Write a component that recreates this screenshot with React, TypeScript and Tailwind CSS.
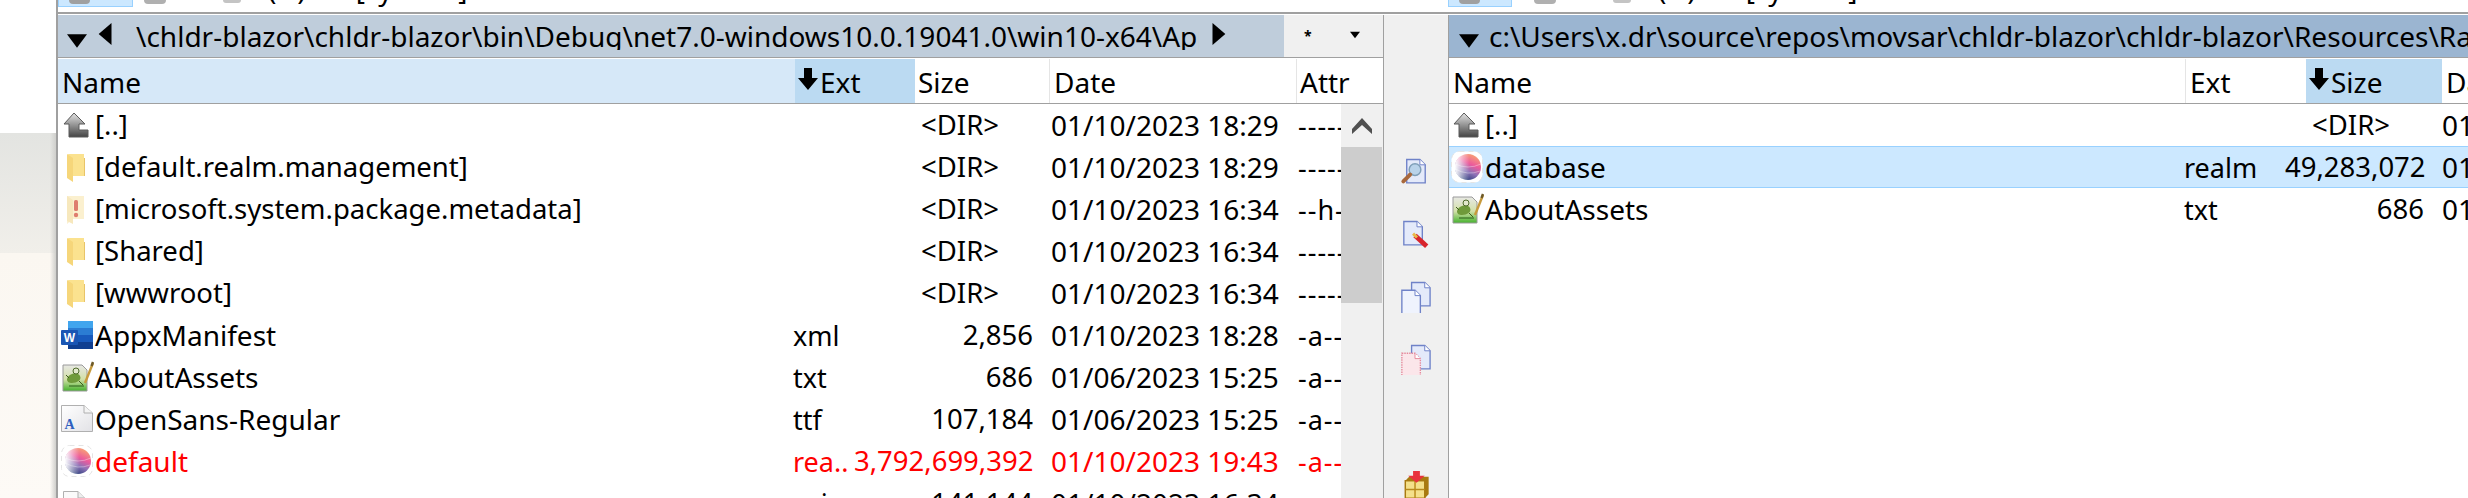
import React from 'react';

type IconName = 'up' | 'folder' | 'warn' | 'word' | 'notepad' | 'font' | 'realm' | 'blank';

interface FileRow {
  icon: IconName;
  name: string;
  ext?: string;
  size: string;
  date: string;
  attr?: string;
  red?: boolean;
  selected?: boolean;
}

const leftRows: FileRow[] = [
  { icon: 'up', name: '[..]', size: '<DIR>', date: '01/10/2023 18:29', attr: '-----' },
  { icon: 'folder', name: '[default.realm.management]', size: '<DIR>', date: '01/10/2023 18:29', attr: '-----' },
  { icon: 'warn', name: '[microsoft.system.package.metadata]', size: '<DIR>', date: '01/10/2023 16:34', attr: '--h--' },
  { icon: 'folder', name: '[Shared]', size: '<DIR>', date: '01/10/2023 16:34', attr: '-----' },
  { icon: 'folder', name: '[wwwroot]', size: '<DIR>', date: '01/10/2023 16:34', attr: '-----' },
  { icon: 'word', name: 'AppxManifest', ext: 'xml', size: '2,856', date: '01/10/2023 18:28', attr: '-a---' },
  { icon: 'notepad', name: 'AboutAssets', ext: 'txt', size: '686', date: '01/06/2023 15:25', attr: '-a---' },
  { icon: 'font', name: 'OpenSans-Regular', ext: 'ttf', size: '107,184', date: '01/06/2023 15:25', attr: '-a---' },
  { icon: 'realm', name: 'default', ext: 'rea..', size: '3,792,699,392', date: '01/10/2023 19:43', attr: '-a---', red: true },
  { icon: 'blank', name: 'resources', ext: 'pri', size: '141,144', date: '01/10/2023 16:34', attr: '-a---' },
];

const rightRows: FileRow[] = [
  { icon: 'up', name: '[..]', size: '<DIR>', date: '01/10/2023 16:34' },
  { icon: 'realm', name: 'database', ext: 'realm', size: '49,283,072', date: '01/10/2023 16:34', selected: true },
  { icon: 'notepad', name: 'AboutAssets', ext: 'txt', size: '686', date: '01/06/2023 15:25' },
];

const RowIcon: React.FC<{ name: IconName }> = ({ name }) => (
  <svg viewBox="0 0 34 32" className="w-[34px] h-[32px] shrink-0">
    <defs>
      <linearGradient id="upFill" x1="0" y1="0" x2="0" y2="1">
        <stop offset="0" stopColor="#e4e4e4" />
        <stop offset="1" stopColor="#444444" />
      </linearGradient>
      <linearGradient id="sphere" x1="0.8" y1="0.1" x2="0.4" y2="1">
        <stop offset="0" stopColor="#f79a78" />
        <stop offset="0.35" stopColor="#ec5a9c" />
        <stop offset="0.65" stopColor="#8f74b8" />
        <stop offset="1" stopColor="#2d3f7c" />
      </linearGradient>
      <linearGradient id="sphereFade" x1="0" y1="0" x2="1" y2="0">
        <stop offset="0" stopColor="#ffffff" stopOpacity="1" />
        <stop offset="0.55" stopColor="#ffffff" stopOpacity="0" />
      </linearGradient>
      <linearGradient id="pageFill" x1="0" y1="0" x2="1" y2="1">
        <stop offset="0" stopColor="#ffffff" />
        <stop offset="1" stopColor="#e2e2e6" />
      </linearGradient>
      <linearGradient id="noteFill" x1="0" y1="0" x2="0" y2="1">
        <stop offset="0" stopColor="#e8e8e4" />
        <stop offset="0.55" stopColor="#d2e0a8" />
        <stop offset="1" stopColor="#46b22e" />
      </linearGradient>
    </defs>
    {name === 'up' && (
      <path d="M14 4 L25 15 H19 V21 H28 V28 H9 V15 H4 Z" fill="url(#upFill)" stroke="#5a5a5a" strokeWidth="1" />
    )}
    {name === 'folder' && (
      <g>
        <path d="M8 3 H24 V25 H13 Z" fill="#fbe28f" />
        <path d="M7 3 L13 7 V31 L7 27 Z" fill="#f6d67a" />
        <path d="M13 25 H25 V7 H24 V25 Z" fill="#e8c468" />
      </g>
    )}
    {name === 'warn' && (
      <g>
        <path d="M7 3 H24 V26 H13 L7 31 Z" fill="#fbf0cf" />
        <path d="M7 3 L13 7 V31 L7 28 Z" fill="#f7e8bd" />
        <rect x="14" y="7" width="4" height="11" rx="1.5" fill="#df7d6e" />
        <circle cx="16" cy="22" r="2.2" fill="#df7d6e" />
      </g>
    )}
    {name === 'word' && (
      <g>
        <rect x="8" y="2" width="25" height="7" fill="#41a5ee" />
        <rect x="8" y="9" width="25" height="7" fill="#2b7cd3" />
        <rect x="8" y="16" width="25" height="7" fill="#185abd" />
        <rect x="8" y="23" width="25" height="7" fill="#103f91" />
        <rect x="1" y="11" width="17" height="15" rx="1" fill="#1a56b4" />
        <text x="9.5" y="22.5" textAnchor="middle" fontSize="12" fontWeight="700" fill="#ffffff" fontFamily="'Liberation Sans', sans-serif">W</text>
      </g>
    )}
    {name === 'notepad' && (
      <g>
        <path d="M3 4 H22 L27 9 V30 H3 Z" fill="url(#noteFill)" stroke="#9a9a9a" strokeWidth="1" />
        <path d="M7 18 C9 12 18 11 20 15 C22 19 17 22 12 22 C9 22 7 21 7 18 Z" fill="#6f9a3a" />
        <circle cx="16" cy="10" r="3" fill="#e2e8cc" stroke="#4e6a2a" strokeWidth="1" />
        <path d="M6 14 L9 17 M19 20 L23 24" stroke="#3d5c1c" strokeWidth="1" />
        <path d="M9 25 H24" stroke="#2d5e1a" strokeWidth="1" />
        <path d="M33 2 L25 22" stroke="#c79a3c" strokeWidth="2.4" />
        <path d="M33 1 L31.5 5" stroke="#6d5a2a" strokeWidth="2.4" />
      </g>
    )}
    {name === 'font' && (
      <g>
        <path d="M1.5 2.5 H24 L32.5 10 V28.5 H1.5 Z" fill="url(#pageFill)" stroke="#b0b0b0" strokeWidth="1" />
        <path d="M24 2.5 V10 H32.5" fill="#f4f4f4" stroke="#b0b0b0" strokeWidth="1" />
        <text x="9.5" y="26" textAnchor="middle" fontSize="14" fontWeight="700" fill="#2f5fbf" fontFamily="'Liberation Serif', serif">A</text>
      </g>
    )}
    {name === 'realm' && (
      <g>
        <rect x="1.5" y="0.5" width="31" height="31" rx="8" fill="#ffffff" stroke="#e4e4e4" strokeWidth="1" strokeDasharray="5 4" />
        <circle cx="18" cy="16" r="13" fill="url(#sphere)" />
        <path d="M5 13 Q18 19 31 13 M5 18 Q18 25 30 20" fill="none" stroke="#ffffff" strokeOpacity="0.35" strokeWidth="1" />
        <circle cx="18" cy="16" r="13.2" fill="url(#sphereFade)" />
      </g>
    )}
    {name === 'blank' && (
      <g>
        <path d="M3.5 4.5 H18 L24.5 11 V32 H3.5 Z" fill="#fafafa" stroke="#b0b0b0" strokeWidth="1" />
        <path d="M18 4.5 V11 H24.5" fill="#eeeeee" stroke="#b0b0b0" strokeWidth="1" />
      </g>
    )}
  </svg>
);

const SortArrow: React.FC = () => (
  <svg viewBox="0 0 22 24" className="w-[22px] h-[24px] shrink-0 -translate-y-[3px]">
    <path d="M7 1 H15 V11 H21 L11 23 L1 11 H7 Z" fill="#000000" />
  </svg>
);

const Tri: React.FC<{ dir: 'down' | 'left' | 'right'; className: string }> = ({ dir, className }) => (
  <svg viewBox="0 0 24 24" className={className}>
    {dir === 'down' && <path d="M0 4 H24 L12 20 Z" fill="#000000" />}
    {dir === 'left' && <path d="M18 0 V24 L4 12 Z" fill="#000000" />}
    {dir === 'right' && <path d="M6 0 L20 12 L6 24 Z" fill="#000000" />}
  </svg>
);

const ToolDoc: React.FC<{ x: number; y: number; fill?: string; stroke?: string; dash?: boolean }> = ({ x, y, fill = '#e4eafa', stroke = '#6f82c8', dash }) => (
  <g transform={`translate(${x} ${y})`}>
    <path d="M0.5 0.5 H14 L19.5 6 V24.5 H0.5 Z" fill={fill} stroke={stroke} strokeWidth="1.4" strokeDasharray={dash ? '1.5 1' : undefined} />
    <path d="M14 0.5 V6 H19.5" fill="#ffffff" stroke={stroke} strokeWidth="1" />
  </g>
);

const MiddleToolbar: React.FC = () => (
  <div className="w-[66px] shrink-0 bg-[#f0f0f0] border-x border-[#a0a0a0] flex flex-col items-center pt-[143px]">
    <svg viewBox="0 0 30 28" className="w-[30px] h-[28px] ml-[-2px]">
      <ToolDoc x={6} y={1} />
      <circle cx="15" cy="12" r="6" fill="#b9d3ea" stroke="#7f9fb8" strokeWidth="1.5" />
      <path d="M10 17 L3 24" stroke="#a8683c" strokeWidth="4" strokeLinecap="round" />
    </svg>
    <svg viewBox="0 0 30 30" className="w-[30px] h-[30px] mt-[35px]">
      <ToolDoc x={2} y={1} />
      <path d="M14 16 L26 27" stroke="#d8242c" strokeWidth="5" />
      <path d="M12 14 L16 18" stroke="#e8b94a" strokeWidth="3" />
    </svg>
    <svg viewBox="0 0 32 32" className="w-[32px] h-[32px] mt-[32px] ml-[-2px]">
      <ToolDoc x={12} y={1} />
      <ToolDoc x={2} y={9} fill="#eff3fd" />
    </svg>
    <svg viewBox="0 0 32 32" className="w-[32px] h-[32px] mt-[31px] ml-[-2px]">
      <ToolDoc x={12} y={1} />
      <ToolDoc x={2} y={9} fill="#fbe6ea" stroke="#e58a9c" dash />
    </svg>
    <svg viewBox="0 0 30 28" className="w-[30px] h-[28px] mt-[96px]">
      <rect x="4" y="10" width="20" height="18" fill="#f4e08a" stroke="#a87a10" strokeWidth="1.5" />
      <path d="M4 10 L8 6 H28 V24 L24 28 V10 Z" fill="#a87a10" />
      <path d="M14 10 V28 M4 19 H24" stroke="#b88a1c" strokeWidth="1.5" />
      <path d="M12 0 H19 V5 H24 L15.5 12 L7 5 H12 Z" fill="#e8323c" />
    </svg>
  </div>
);

// drive buttons: only the lower edge of the row is on screen
const DriveBar: React.FC<{ btnW: string; gap: string }> = ({ btnW, gap }) => (
  <div className="w-[704px] shrink-0 flex items-start whitespace-nowrap">
    <div className={`${btnW} h-[7px] shrink-0 bg-[#cce8ff] border border-t-0 border-[#99d1ff] flex pl-[10px]`}>
      <div className="w-[21px] h-[4px] rounded-b-full bg-[#a0a0a0]" />
    </div>
    <div className={`w-[22px] h-[4px] shrink-0 ${gap} rounded-b-full bg-[#b0b0b0]`} />
    <div className="w-[18px] h-[3px] shrink-0 ml-[57px] rounded-b-full bg-[#c4c4c4]" />
    <div className="-mt-[25px] shrink-0 flex">
      <span className="ml-[27px]">(c:)</span>
      <span className="ml-[50px]">[system]</span>
      <span className="ml-[46px]">/</span>
      <span className="ml-[46px]">/</span>
    </div>
  </div>
);

const Row: React.FC<{ row: FileRow; extW: string; sizeW: string; nameW: string; iconPad: string }> = ({ row, extW, sizeW, nameW, iconPad }) => (
  <div
    className={`h-[42px] shrink-0 flex items-center whitespace-nowrap border-y ${row.selected ? 'bg-[#cce8ff] border-[#99d1ff]' : 'border-transparent'} ${row.red ? 'text-[#ff0000]' : 'text-black'}`}
  >
    <div className={`${nameW} shrink-0 flex items-center ${iconPad}`}>
      <RowIcon name={row.icon} />
      <span className={`ml-[1px] ${row.name.startsWith('[') ? 'text-[27.5px]' : ''}`}>{row.name}</span>
    </div>
    <div className={`${extW} shrink-0 text-[27px] -translate-x-[1px]`}>{row.ext}</div>
    <div className={`${sizeW} shrink-0 text-right text-[27.5px] ${row.size === '<DIR>' ? 'pr-[34px]' : ''}`}>{row.size}</div>
    <div className="w-[265px] shrink-0 pl-[18px]">{row.date}</div>
    {row.attr && <div className="flex-1 overflow-hidden tracking-[1px] text-[27px]">{row.attr}</div>}
  </div>
);

export default function App() {
  return (
    <div className="w-[2468px] h-[498px] overflow-hidden flex bg-white text-[28px] leading-none font-['Noto_Sans','Open_Sans',sans-serif]">
      {/* desktop behind the window */}
      <div className="relative w-[56px] shrink-0 flex flex-col">
        <div className="h-[133px] bg-white" />
        <div className="h-[120px] bg-linear-to-b from-[#e3e4e1] to-[#f1efea]" />
        <div className="flex-1 bg-linear-to-b from-[#fbf7f1] to-[#fdfaf6]" />
        <div className="absolute right-0 top-[133px] bottom-0 w-[6px] bg-linear-to-r from-transparent to-[#cfcfcc]" />
      </div>

      <div className="flex-1 flex flex-col border-l-2 border-[#a0a0a0] min-w-0">
        <div className="h-[12px] shrink-0 flex overflow-hidden">
          <DriveBar btnW="w-[75px]" gap="ml-[11px]" />
          <div className="w-[686px] shrink-0" />
          <DriveBar btnW="w-[64px]" gap="ml-[22px]" />
        </div>
        <div className="h-[2px] shrink-0 bg-[#a0a0a0]" />
        <div className="h-[1px] shrink-0 bg-white" />

        <div className="flex-1 flex min-h-0">
          {/* left panel */}
          <div className="w-[1325px] shrink-0 flex flex-col">
            <div className="h-[42px] shrink-0 flex items-center">
              <div className="w-[1226px] h-full shrink-0 flex items-center bg-[#bfcddb]">
                <Tri dir="down" className="w-[20px] h-[20px] ml-[9px] mt-[10px]" />
                <Tri dir="left" className="w-[22px] h-[26px] ml-[8px] -mt-[4px]" />
                <div className="w-[1063px] ml-[19px] overflow-hidden whitespace-nowrap">
                  \chldr-blazor\chldr-blazor\bin\Debug\net7.0-windows10.0.19041.0\win10-x64\AppX\
                </div>
                <Tri dir="right" className="w-[22px] h-[26px] ml-[8px] -mt-[4px]" />
              </div>
              <div className="flex-1 h-full bg-[#f0f0f0] flex items-center text-[14px]">
                <span className="ml-[20px] font-bold">*</span>
                <Tri dir="down" className="w-[10px] h-[10px] ml-[38px] -mt-[3px]" />
              </div>
            </div>
            <div className="h-[1px] shrink-0 bg-[#a0a0a0]" />
            <div className="h-[1px] shrink-0 bg-white" />
            <div className="h-[44px] shrink-0 flex items-center">
              <div className="w-[737px] h-full shrink-0 bg-[#d6e8f8] flex items-center pl-[4px] pt-[2px]">Name</div>
              <div className="w-[120px] h-full shrink-0 bg-[#bbdaf2] flex items-center pl-[2px] pt-[2px]">
                <SortArrow />
                <span className="ml-[1px]">Ext</span>
              </div>
              <div className="w-[135px] h-full shrink-0 flex items-center pl-[3px] pt-[2px] border-r border-[#e5e5e5]">Size</div>
              <div className="w-[247px] h-full shrink-0 flex items-center pl-[4px] pt-[2px] border-r border-[#e5e5e5]">Date</div>
              <div className="flex-1 flex items-center pl-[3px] pt-[2px]">Attr</div>
            </div>
            <div className="h-[1px] shrink-0 bg-[#a0a0a0]" />
            <div className="flex-1 flex min-h-0">
              <div className="w-[1283px] shrink-0 overflow-hidden">
                {leftRows.map((r) => (
                  <Row key={r.name} row={r} nameW="w-[736px]" extW="w-[60px]" sizeW="w-[179px]" iconPad="pl-[2px]" />
                ))}
              </div>
              <div className="flex-1 flex flex-col bg-[#f0f0f0]">
                <div className="h-[43px] shrink-0 flex items-center justify-center">
                  <svg viewBox="0 0 20 16" className="w-[20px] h-[16px]">
                    <path d="M10 0 L20 11 V16 L10 7 L0 16 V11 Z" fill="#505050" />
                  </svg>
                </div>
                <div className="h-[156px] shrink-0 bg-[#cdcdcd] mr-[1px]" />
              </div>
            </div>
          </div>

          <MiddleToolbar />

          {/* right panel */}
          <div className="flex-1 flex flex-col min-w-0">
            <div className="h-[42px] shrink-0 flex items-center bg-[#9bb5d1] overflow-hidden whitespace-nowrap">
              <Tri dir="down" className="w-[24px] h-[20px] ml-[8px] mt-[10px] shrink-0" />
              <span className="ml-[8px]">c:\Users\x.dr\source\repos\movsar\chldr-blazor\chldr-blazor\Resources\Raw\</span>
            </div>
            <div className="h-[1px] shrink-0 bg-[#a0a0a0]" />
            <div className="h-[1px] shrink-0 bg-white" />
            <div className="h-[44px] shrink-0 flex items-center whitespace-nowrap">
              <div className="w-[737px] h-full shrink-0 flex items-center pl-[4px] pt-[2px] border-r border-[#e5e5e5]">Name</div>
              <div className="w-[120px] h-full shrink-0 flex items-center pl-[4px] pt-[2px]">Ext</div>
              <div className="w-[136px] h-full shrink-0 bg-[#bbdaf2] flex items-center pl-[2px] pt-[2px]">
                <SortArrow />
                <span className="ml-[1px]">Size</span>
              </div>
              <div className="flex-1 overflow-hidden pl-[4px] pt-[2px]">Date</div>
            </div>
            <div className="h-[1px] shrink-0 bg-[#a0a0a0]" />
            <div className="flex-1 min-h-0 overflow-hidden">
              {rightRows.map((r) => (
                <Row key={r.name} row={r} nameW="w-[736px]" extW="w-[100px]" sizeW="w-[139px]" iconPad="pl-[1px]" />
              ))}
            </div>
          </div>
        </div>
      </div>
    </div>
  );
}
